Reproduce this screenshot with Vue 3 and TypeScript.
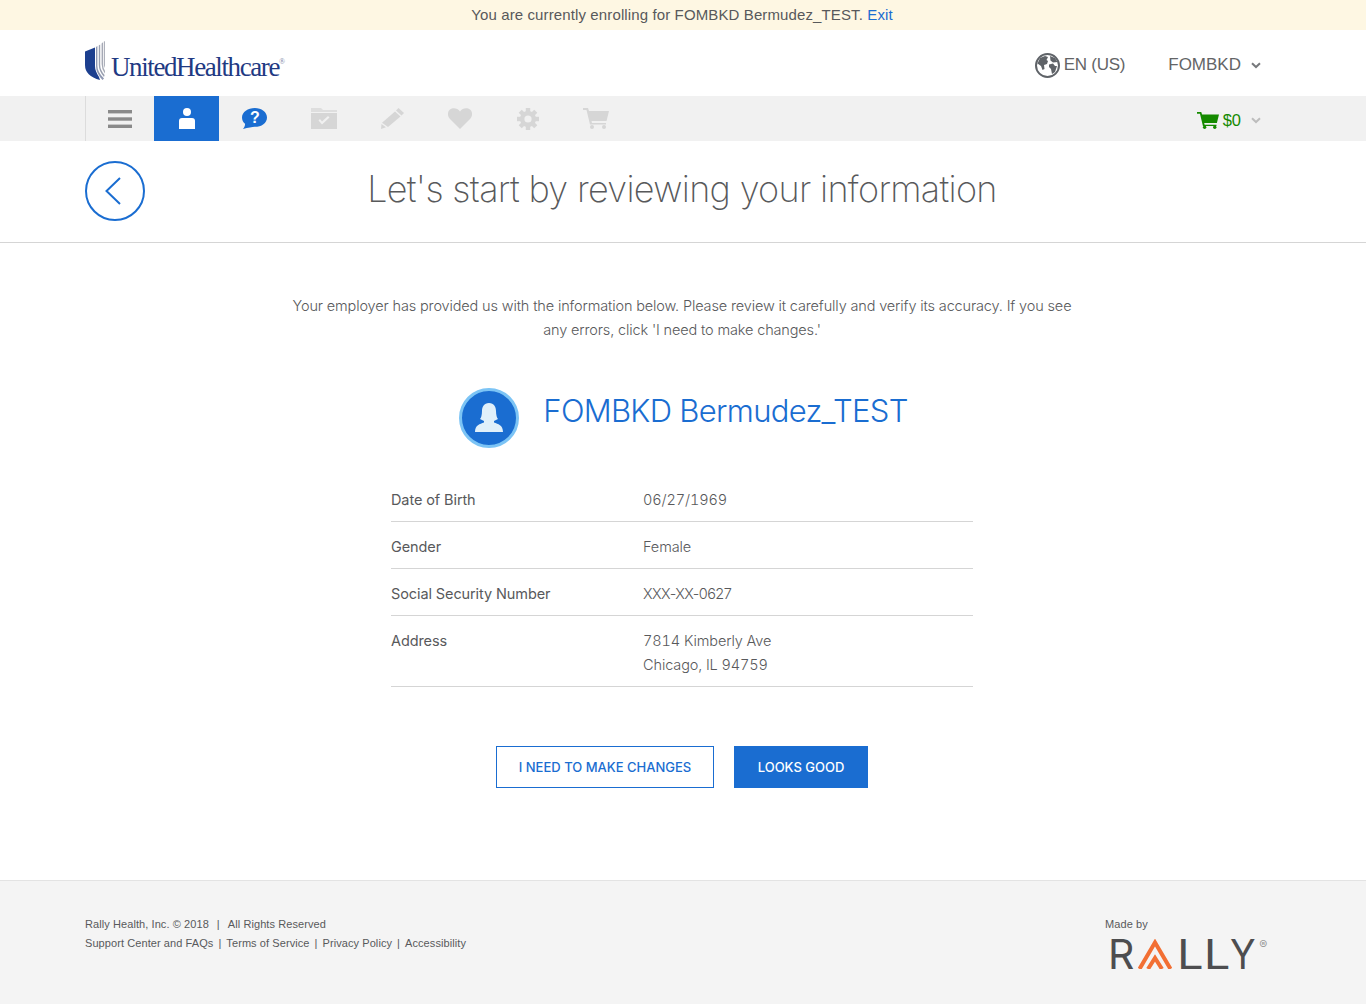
<script setup lang="ts">
/**
 * Enrollment review page: header, icon nav, member details and footer.
 */
const details = [
  { label: "Date of Birth", lines: ["06/27/1969"] },
  { label: "Gender", lines: ["Female"] },
  { label: "Social Security Number", lines: ["XXX-XX-0627"], masked: true },
  { label: "Address", lines: ["7814 Kimberly Ave", "Chicago, IL 94759"] },
];

const footerLinks = ["Support Center and FAQs", "Terms of Service", "Privacy Policy", "Accessibility"];
const gearTeeth = [0, 45, 90, 135];
</script>

<template>
  <div class="page">
    <div class="banner">
      You are currently enrolling for FOMBKD Bermudez_TEST. <a class="banner-link">Exit</a>
    </div>

    <header class="top">
      <div class="logo">
        <svg class="logo-mark" width="20" height="40" viewBox="0 0 20 40">
          <path d="M0 10.5 L10 6.5 V25 Q10 30 14 36 L15 39 Q0 35 0 24 Z" fill="#1c3f8f" />
          <path d="M11 6 L12.4 5 V25 Q12.4 31 19 37.5 L17.5 39 Q11 32 11 25 Z" fill="#8f98b2" />
          <path d="M13.8 4.5 L15.2 3.4 V24 Q15.2 29 19.6 34 L19 36 Q13.8 30 13.8 24 Z" fill="#9aa0b0" />
          <path d="M16.6 2.5 L18 1.2 V22 Q18 27 20 30 L19.8 32.5 Q16.6 28 16.6 23 Z" fill="#a5a9b5" />
          <path d="M18.8 .8 L20 0 V27 Q18.8 25 18.8 22 Z" fill="#aeb1bb" />
        </svg>
        <span class="logo-text">UnitedHealthcare<sup class="logo-reg">®</sup></span>
      </div>
      <div class="top-right">
        <svg class="globe" width="25" height="25" viewBox="0 0 25 25">
          <circle cx="12.5" cy="12.5" r="11.5" fill="#fff" stroke="#5f6368" stroke-width="2" />
          <path d="M5 5 L10 3 L13 4 L11.5 7 L13 8 L12 11 L9 12 L9.5 16 L7.5 17 L6 13 L2.5 10.5 Z" fill="#5f6368" />
          <path d="M15 3 L20 5 L22.5 9 L18 9.5 L15.5 7.5 Z" fill="#5f6368" />
          <path d="M14 11.5 L18 10.5 L20 13 L22 13 L20 19 L17 21 L16 16 L14 14 Z" fill="#5f6368" />
        </svg>
        <span class="locale">EN (US)</span>
        <span class="user">FOMBKD</span>
        <svg class="caret" width="10" height="7" viewBox="0 0 10 7">
          <path d="M1 1.2 L5 5 L9 1.2" fill="none" stroke="#77797c" stroke-width="2" />
        </svg>
      </div>
    </header>

    <nav class="nav">
      <div class="nav-icons">
        <div class="nav-item">
          <svg width="24" height="18" viewBox="0 0 24 18" fill="#8a8a8a">
            <rect width="24" height="3.4" y="0" />
            <rect width="24" height="3.4" y="7.3" />
            <rect width="24" height="3.4" y="14.6" />
          </svg>
        </div>
        <div class="nav-item nav-item--active">
          <svg width="16" height="21" viewBox="0 0 16 21" fill="#fff">
            <circle cx="8" cy="4" r="4" />
            <path d="M0 21 V13 Q0 10 3 10 H13 Q16 10 16 13 V21 Z" />
          </svg>
        </div>
        <div class="nav-item">
          <svg width="25" height="21" viewBox="0 0 25 21">
            <path d="M12.8 0 C19.5 0 25 4 25 9.4 C25 15 19.5 18.8 12.8 18.8 C10 18.8 6.5 19.8 1 21 C2.6 19 3.2 17 3 15.8 C1 14 0 12 0 9.4 C0 4 6 0 12.8 0 Z" fill="#1a6dd1" />
            <text x="12.8" y="15" class="help-mark">?</text>
          </svg>
        </div>
        <div class="nav-item">
          <svg width="26" height="21" viewBox="0 0 26 21">
            <path d="M0 0 H10 L12 2 H26 V4 H0 Z" fill="#dedede" />
            <path fill-rule="evenodd" d="M0 5 H26 V21 H0 Z M7.5 12.5 L11 16.5 L18.5 9.5 L17 8 L11 13.5 L9 11 Z" fill="#d6d6d6" />
          </svg>
        </div>
        <div class="nav-item">
          <svg width="23" height="21" viewBox="0 0 23 21" fill="#d6d6d6">
            <path d="M17.5 0 L23 5 L20.5 7.5 L15 2.5 Z" />
            <path d="M14 3.5 L19.5 8.5 L7 19 L1 14.8 Z" />
            <path d="M.5 16 L5 19.3 L0 21 Z" />
          </svg>
        </div>
        <div class="nav-item">
          <svg width="24" height="21" viewBox="0 0 24 21">
            <path d="M12 21 L2 11 C-1 8 -.5 3.5 2 1.6 C5 -.8 9.5 0 12 3.5 C14.5 0 19 -.8 22 1.6 C24.5 3.5 25 8 22 11 Z" fill="#d6d6d6" />
          </svg>
        </div>
        <div class="nav-item">
          <svg width="22" height="22" viewBox="0 0 22 22">
            <circle cx="11" cy="11" r="8" fill="#d6d6d6" />
            <rect v-for="angle in gearTeeth" :key="angle" x="8.8" y="0" width="4.4" height="22" fill="#d6d6d6" :transform="`rotate(${angle} 11 11)`" />
            <circle cx="11" cy="11" r="3.6" fill="#f1f1f1" />
          </svg>
        </div>
        <div class="nav-item">
          <svg width="26" height="21" viewBox="0 0 26 21" fill="#d6d6d6">
            <path d="M0 0 H5 L6 3 H26 L23.5 13 H8.5 L9 15 H23 V16.5 H7 L3.5 2 H0 Z" />
            <circle cx="9" cy="19" r="2" />
            <circle cx="21" cy="19" r="2" />
          </svg>
        </div>
      </div>
      <div class="nav-cart">
        <svg width="22" height="17" viewBox="0 0 26 20" fill="#158a00">
          <path d="M0 0 H5 L6 3 H26 L23.5 13 H8.5 L9 15 H23 V16.5 H7 L3.5 2 H0 Z" />
          <circle cx="9" cy="18" r="2" />
          <circle cx="21" cy="18" r="2" />
        </svg>
        <span class="cart-total">$0</span>
        <svg class="caret" width="10" height="7" viewBox="0 0 10 7">
          <path d="M1 1.2 L5 5 L9 1.2" fill="none" stroke="#bdbdbd" stroke-width="2" />
        </svg>
      </div>
    </nav>

    <section class="title-bar">
      <button class="back" type="button" aria-label="Back">
        <svg width="60" height="60" viewBox="0 0 60 60">
          <circle cx="30" cy="30" r="29" fill="none" stroke="#1a6dd1" stroke-width="2" />
          <path d="M35 17 L21.5 30 L35 43" fill="none" stroke="#1a6dd1" stroke-width="2" />
        </svg>
      </button>
      <h1 class="title">Let's start by reviewing your information</h1>
    </section>

    <main class="content">
      <p class="intro">
        Your employer has provided us with the information below. Please review it carefully and verify its accuracy. If you see
        any errors, click 'I need to make changes.'
      </p>

      <div class="person">
        <svg width="60" height="60" viewBox="0 0 60 60">
          <circle cx="30" cy="30" r="28.5" fill="#1a6dd1" stroke="#7cc4f5" stroke-width="3" />
          <path d="M30 15 C35 15 37 19 37 23 C37 27 38 30 39 31 L35 33 V34.5 C39 36 44 37 44 44 H16 C16 37 21 36 25 34.5 V33 L21 31 C22 30 23 27 23 23 C23 19 25 15 30 15 Z" fill="#e0f0fa" />
        </svg>
        <h2 class="person-name">FOMBKD Bermudez_TEST</h2>
      </div>

      <dl class="details">
        <div v-for="row in details" :key="row.label" class="detail-row">
          <dt class="detail-label">{{ row.label }}</dt>
          <dd class="detail-value" :class="{ 'detail-value--masked': row.masked }">
            <div v-for="line in row.lines" :key="line">{{ line }}</div>
          </dd>
        </div>
      </dl>

      <div class="actions">
        <button class="btn btn--outline" type="button">I NEED TO MAKE CHANGES</button>
        <button class="btn btn--solid" type="button">LOOKS GOOD</button>
      </div>
    </main>

    <footer class="footer">
      <div class="legal">
        <div>Rally Health, Inc. © 2018<span class="legal-sep">|</span>All Rights Reserved</div>
        <div class="legal-links">
          <template v-for="(link, i) in footerLinks" :key="link">
            <span v-if="i > 0" class="sep">|</span>
            <span>{{ link }}</span>
          </template>
        </div>
      </div>
      <div class="made-by">
        <div class="made-label">Made by</div>
        <div class="rally">
          <span>R</span>
          <span class="rally-a">A
            <svg class="rally-a-mark" width="34" height="30" viewBox="0 0 34 30" fill="none" stroke="#f26f33" stroke-width="4">
              <path d="M1.5 30 L17 3.5 L32.5 30" />
              <path d="M10 30 L17 19 L24 30" />
            </svg>
          </span>
          <span class="rally-ll">LL</span>
          <span class="rally-y">Y</span>
          <sup class="rally-reg">®</sup>
        </div>
      </div>
    </footer>
  </div>
</template>

<style>
html,
body {
  margin: 0;
  background: #fff;
}
</style>

<style scoped>
.page {
  font-family: "Liberation Sans", Arial, sans-serif;
  color: #5a5a5a;
  min-height: 1004px;
  display: flex;
  flex-direction: column;
}

.banner {
  height: 30px;
  line-height: 30px;
  background: #fef7e3;
  text-align: center;
  font-size: 15px;
  letter-spacing: .12px;
  padding-right: 2px;
  color: #58595b;
}

.banner-link {
  color: #1a6dd1;
}

.top {
  height: 66px;
  display: flex;
  justify-content: space-between;
  align-items: center;
  padding: 0 105px 0 85px;
}

.logo {
  display: flex;
  align-items: center;
  gap: 6px;
  margin-top: -4px;
}

.logo-text {
  font-family: "Liberation Serif", serif;
  font-size: 27px;
  letter-spacing: -1.4px;
  color: #1f3a83;
  margin-top: 13px;
}

.logo-reg {
  font-size: 8px;
  vertical-align: 12px;
  line-height: 0;
  letter-spacing: 0;
  color: #7c86a6;
}

.top-right {
  display: flex;
  align-items: center;
  font-size: 17px;
  color: #636466;
  margin-top: 4px;
}

.locale {
  margin-left: 4px;
  letter-spacing: -.25px;
}

.user {
  margin-left: 43px;
}

.caret {
  margin-left: 10px;
}

.nav {
  height: 45px;
  background: #f1f1f1;
  display: flex;
  justify-content: space-between;
  align-items: stretch;
  padding: 0 105px 0 85px;
}

.nav-icons {
  display: grid;
  grid-template-columns: 68px 65px 71px 68px 69px 66px 70px 66px;
  border-left: 1px solid #dcdcdc;
}

.nav-item {
  display: flex;
  align-items: center;
  justify-content: center;
}

.nav-item--active {
  background: #1a6dd1;
}

.help-mark {
  font-family: "Liberation Sans", sans-serif;
  font-size: 16px;
  font-weight: 700;
  fill: #fff;
  text-anchor: middle;
}

.nav-cart {
  display: flex;
  align-items: center;
  padding-top: 3px;
}

.cart-total {
  margin-left: 4px;
  font-size: 16.5px;
  color: #158a00;
}

.title-bar {
  height: 101px;
  border-bottom: 1px solid #d5d5d5;
  display: grid;
  grid-template-columns: 60px 1fr 60px;
  align-items: center;
  padding: 0 85px;
}

.back {
  padding: 0;
  border: 0;
  background: none;
  width: 60px;
  height: 60px;
  margin-top: -1px;
}

.title {
  margin: 0 2px 5px 0;
  text-align: center;
  font-family: Inter, sans-serif;
  font-size: 36px;
  font-weight: 200;
  letter-spacing: -.68px;
  color: #58595b;
}

.content {
  flex: 1;
  display: flex;
  flex-direction: column;
  align-items: center;
  padding-top: 51px;
}

.intro {
  margin: 0 2px 0 0;
  width: 790px;
  text-align: center;
  font-family: Inter, sans-serif;
  font-weight: 300;
  font-size: 14.5px;
  letter-spacing: -.145px;
  line-height: 24px;
  color: #58595b;
}

.person {
  margin: 46px 0 0 1px;
  display: flex;
  gap: 24px;
  height: 60px;
}

.person-name {
  margin: 3px 0 0;
  font-family: Inter, sans-serif;
  font-weight: 300;
  font-size: 31px;
  letter-spacing: -.7px;
  line-height: 40px;
  color: #1a6dd1;
}

.details {
  margin: 27px 2px 0 0;
  width: 582px;
}

.detail-row {
  display: grid;
  grid-template-columns: 252px 1fr;
  padding: 13px 0 9px;
  border-bottom: 1px solid #d5d5d5;
  font-family: Inter, sans-serif;
  font-size: 14.5px;
  line-height: 24px;
  letter-spacing: -.1px;
  color: #58595b;
}

.detail-value {
  margin: 0;
  font-weight: 300;
  font-variant-numeric: tabular-nums;
}

.detail-value--masked {
  font-variant-numeric: normal;
  letter-spacing: -.55px;
}

.actions {
  margin: 59px 2px 0 0;
  display: flex;
  gap: 20px;
}

.btn {
  height: 42px;
  box-sizing: border-box;
  font-family: Inter, sans-serif;
  font-size: 13px;
  font-weight: 500;
  border: 1px solid #1a6dd1;
}

.btn--outline {
  width: 218px;
  background: #fff;
  color: #1a6dd1;
}

.btn--solid {
  width: 134px;
  background: #1a6dd1;
  color: #fff;
}

.footer {
  height: 123px;
  border-top: 1px solid #e3e3e3;
  background: #f4f4f4;
  display: flex;
  justify-content: space-between;
  padding: 0 96px 0 85px;
  font-size: 11px;
  letter-spacing: .08px;
  color: #58595b;
}

.legal {
  padding-top: 34px;
  line-height: 19px;
}

.legal-sep {
  margin: 0 8px;
}

.sep {
  margin: 0 5px;
}

.made-by {
  padding-top: 34px;
  width: 165px;
}

.made-label {
  line-height: 19px;
}

.rally {
  display: flex;
  margin-top: 4px;
  margin-left: 3px;
  font-family: Inter, sans-serif;
  font-size: 41px;
  line-height: 32px;
  color: #4d4d4f;
}

.rally-a {
  position: relative;
  color: transparent;
  margin-left: 7px;
}

.rally-a-mark {
  position: absolute;
  left: -3px;
  top: 1px;
}

.rally-ll {
  margin-left: 7px;
  transform: scaleX(1.15);
  transform-origin: left;
  margin-right: 7px;
}

.rally-y {
  transform: scaleX(.92);
  transform-origin: left;
}

.rally-reg {
  font-size: 12px;
  line-height: 14px;
  color: #9a9a9a;
  margin: 0 0 0 1px;
}
</style>
